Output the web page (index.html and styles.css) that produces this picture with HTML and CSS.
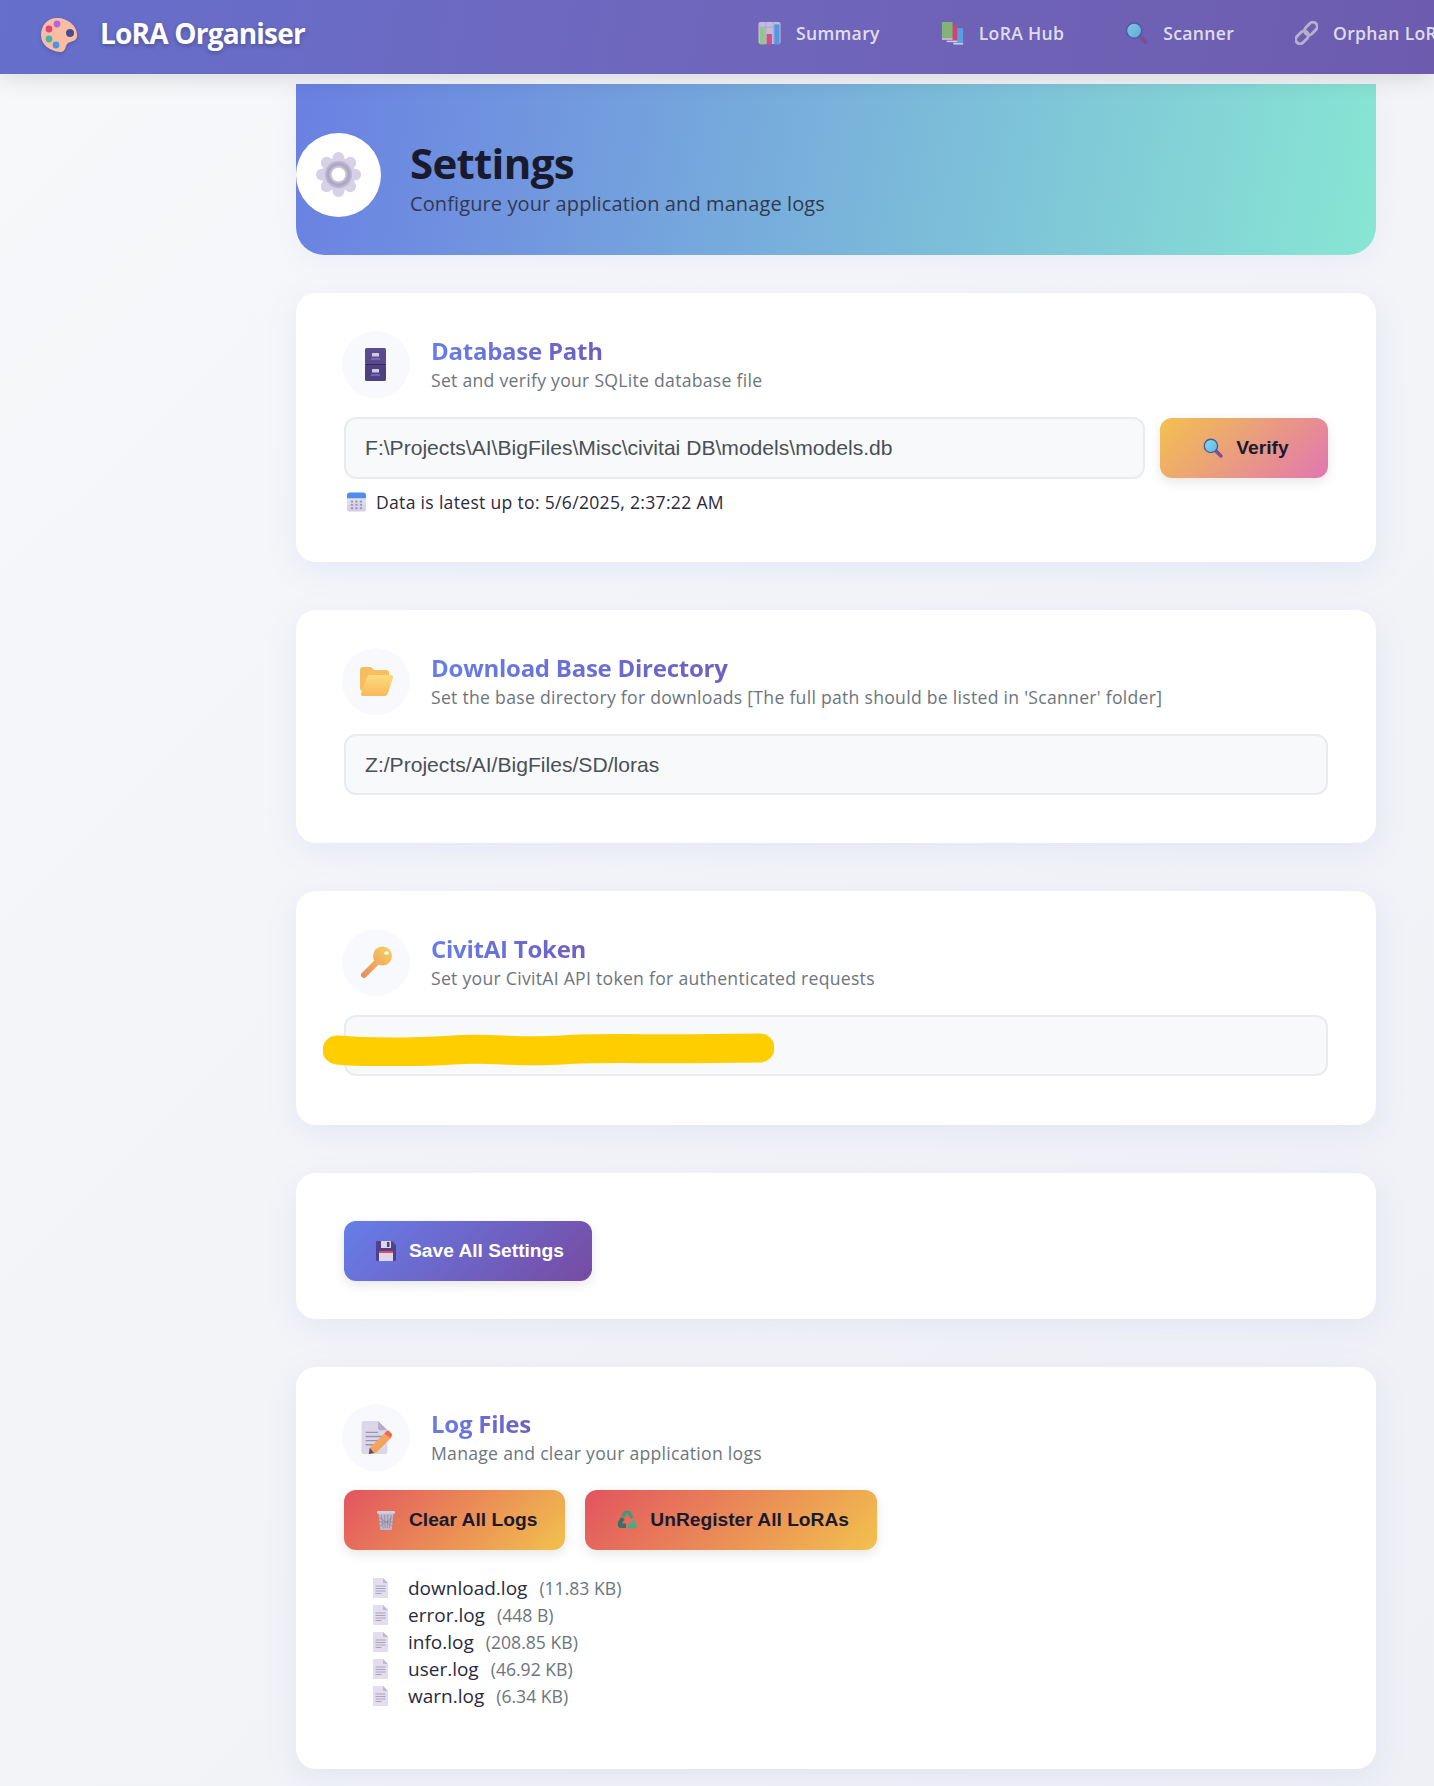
FILE: index.html
```html
<!DOCTYPE html>
<html lang="en">
<head>
    <meta charset="UTF-8">
    <meta name="viewport" content="width=device-width, initial-scale=1.0">
    <title>LoRA Organiser - Settings</title>
    <link rel="stylesheet" href="styles.css">
</head>
<body>
    <svg class="icon-defs" aria-hidden="true">
        <defs>
            <linearGradient id="gradFolder" x1="0" y1="0" x2="0" y2="1"><stop offset="0" stop-color="#fbdc7c"/><stop offset="1" stop-color="#f9b95c"/></linearGradient>
            <linearGradient id="gradKey" gradientUnits="userSpaceOnUse" x1="30" y1="2" x2="3" y2="31"><stop offset="0" stop-color="#f6cf5e"/><stop offset="1" stop-color="#e88d5e"/></linearGradient>
            <linearGradient id="gradLens" x1="0" y1="0" x2="1" y2="1"><stop offset="0" stop-color="#8dd8f0"/><stop offset="1" stop-color="#5cb8e0"/></linearGradient>
            <linearGradient id="gradCal" x1="0" y1="0" x2="0" y2="1"><stop offset="0" stop-color="#eceaf5"/><stop offset="1" stop-color="#d4cde8"/></linearGradient>
            <radialGradient id="gradHub"><stop offset="0.35" stop-color="#e8e5f0"/><stop offset="0.75" stop-color="#a9a3c0"/><stop offset="1" stop-color="#c4bfd6"/></radialGradient>

            <symbol id="i-palette" viewBox="0 0 38 36">
                <path fill="#f9bda3" fill-rule="evenodd" d="M19 1C8 0 1 8 1 18c0 10 9 16 19 17 6 .5 5-7 8-9 4-2 10-2 9-9C36 8 28 2 19 1zM30 12a4 4 0 1 1 0 8 4 4 0 0 1 0-8z"/>
                <circle cx="30" cy="16" r="3.6" fill="#4a4a8c"/>
                <circle cx="17" cy="7" r="3.4" fill="#b565e0"/>
                <circle cx="9" cy="12" r="3.4" fill="#e8437a"/>
                <circle cx="9" cy="22" r="3.4" fill="#45b5a8"/>
                <circle cx="16" cy="28" r="3.4" fill="#4b93ec"/>
            </symbol>
            <symbol id="i-chart" viewBox="0 0 24 24">
                <rect x="0.5" y="0.5" width="23" height="23" rx="2" fill="#d0cbe0"/>
                <path d="M8 .5v23M16 .5v23M.5 6h23" stroke="#bab4cd" stroke-width="1" fill="none"/>
                <rect x="2" y="7" width="5" height="17" fill="#9bd67a"/>
                <rect x="9" y="13" width="5.5" height="11" fill="#e04a80"/>
                <rect x="17" y="3" width="5.5" height="21" fill="#4f9fe8"/>
            </symbol>
            <symbol id="i-books" viewBox="0 0 24 24">
                <rect x="13" y="7" width="10" height="17" fill="#5aa8ee"/>
                <rect x="6" y="4" width="11" height="16" fill="#d8436b"/>
                <rect x="6" y="20" width="11" height="1.5" fill="#e8e4f0"/>
                <rect x="1" y="0.5" width="11" height="17" fill="#86c46a"/>
                <rect x="1" y="17.5" width="11" height="1.5" fill="#e8e4f0"/>
                <rect x="13" y="22.5" width="10" height="1.5" fill="#e8e4f0"/>
            </symbol>
            <symbol id="i-search" viewBox="0 0 24 24">
                <path d="M14.5 14.5l7 7" stroke="#7c4f96" stroke-width="4.2" stroke-linecap="round"/>
                <circle cx="9.5" cy="9.5" r="8" fill="url(#gradLens)" stroke="#3f5f9c" stroke-width="1.6"/>
            </symbol>
            <symbol id="i-link" viewBox="0 0 24 24">
                <g fill="none" stroke="#c4bfd2" stroke-width="3" transform="rotate(-45 12 12)">
                    <rect x="-2" y="7.500" width="15" height="9" rx="4.500"/>
                    <rect x="11" y="7.500" width="15" height="9" rx="4.500"/>
                </g>
            </symbol>
            <symbol id="i-gear" viewBox="0 0 48 48">
                <g fill="#d6d1e7">
                    <circle cx="24" cy="24" r="17"/>
                    <rect x="18" y="1" width="12" height="46" rx="6"/>
                    <rect x="18" y="1" width="12" height="46" rx="6" transform="rotate(45 24 24)"/>
                    <rect x="18" y="1" width="12" height="46" rx="6" transform="rotate(90 24 24)"/>
                    <rect x="18" y="1" width="12" height="46" rx="6" transform="rotate(135 24 24)"/>
                </g>
                <circle cx="24" cy="24" r="14" fill="url(#gradHub)"/>
                <circle cx="24" cy="24" r="7" fill="#fff"/>
            </symbol>
            <symbol id="i-cabinet" viewBox="0 0 21 33">
                <rect width="21" height="16.5" rx="1.5" fill="#5b4a8e"/>
                <rect y="16.5" width="21" height="16.5" rx="1.5" fill="#4f4080"/>
                <path d="M0 16.5h21" stroke="#352b5c" stroke-width="1"/>
                <rect x="7" y="5" width="7" height="3.5" fill="#cfc9e4"/>
                <rect x="6" y="10.5" width="9" height="1" fill="#9a84d6"/>
                <rect x="7" y="21" width="7" height="3.5" fill="#cfc9e4"/>
                <rect x="6" y="26.5" width="9" height="1" fill="#9a84d6"/>
            </symbol>
            <symbol id="i-calendar" viewBox="0 0 20 20">
                <rect width="20" height="20" rx="3" fill="url(#gradCal)"/>
                <path d="M0 6V3a3 3 0 0 1 3-3h14a3 3 0 0 1 3 3v3z" fill="#4f8fec"/>
                <g fill="#9d97b5">
                    <rect x="4" y="8.5" width="2.5" height="2"/><rect x="8.7" y="8.5" width="2.5" height="2"/><rect x="13.4" y="8.5" width="2.5" height="2" fill="#5ca8ec"/>
                    <rect x="4" y="12" width="2.5" height="2"/><rect x="8.7" y="12" width="2.5" height="2"/><rect x="13.4" y="12" width="2.5" height="2"/>
                    <rect x="4" y="15.5" width="2.5" height="2"/><rect x="8.7" y="15.5" width="2.5" height="2"/><rect x="13.4" y="15.5" width="2.5" height="2"/>
                </g>
            </symbol>
            <symbol id="i-folder" viewBox="0 0 33 29">
                <path d="M0 3a3 3 0 0 1 3-3h7c2 0 3 2 4 3h12a3 3 0 0 1 3 3v18H3a3 3 0 0 1-3-3z" fill="#f8bd60"/>
                <path d="M7 10a3 3 0 0 1 3-2h21c1.500 0 2.300 1 2 2.500L28 26a4 4 0 0 1-4 3H3c-1.500 0-2.500-1-2-2.500z" fill="url(#gradFolder)"/>
            </symbol>
            <symbol id="i-key" viewBox="0 0 33 33">
                <path d="M18 15L4 29" fill="none" stroke="url(#gradKey)" stroke-width="6" stroke-linecap="round"/>
                <circle cx="22.500" cy="10" r="9.500" fill="url(#gradKey)"/>
                <ellipse cx="26.500" cy="7" rx="2.300" ry="1.800" fill="#fff"/>
            </symbol>
            <symbol id="i-memo" viewBox="0 0 29 32">
                <path d="M0 2a2 2 0 0 1 2-2h14l9 9v21a2 2 0 0 1-2 2H2a2 2 0 0 1-2-2z" fill="#dcd6ea"/>
                <path d="M16 0l9 9h-7a2 2 0 0 1-2-2z" fill="#b4adc9"/>
                <path d="M4 11h12M4 15h16M4 19h14M4 23h8" stroke="#9a94ad" stroke-width="1.300"/>
                <path d="M22 12l6 5-14 14-7 1 1-6z" fill="#f4a45c"/>
                <path d="M22 12l2-2c1-1 2-1 3 0l2 2c1 1 1 2 0 3l-1 2z" fill="#ee6a50"/>
                <path d="M8 26l-1 6 5-1z" fill="#5a4a6e"/>
            </symbol>
            <symbol id="i-floppy" viewBox="0 0 20 20">
                <path d="M1 0h15l4 4v15a1 1 0 0 1-1 1H1a1 1 0 0 1-1-1V1a1 1 0 0 1 1-1z" fill="#4f4288"/>
                <rect x="5" y="0" width="10" height="7" fill="#dcd8ec"/>
                <rect x="11" y="1" width="2.500" height="5" fill="#4f4288"/>
                <rect x="3" y="10" width="14" height="10" fill="#dcd6ec"/>
                <rect x="3" y="10" width="14" height="2" fill="#e8485c"/>
            </symbol>
            <symbol id="i-trash" viewBox="0 0 20 21">
                <path d="M2 3h16l-2 18H4z" fill="#bdb8cc"/>
                <path d="M5 5l2 14M8.500 5l.7 14M12 5l-.7 14M15.500 5l-2 14M3 8l13.500 9M17 8L3.500 17M2.500 12.500l15 0" stroke="#8d879f" stroke-width=".8" fill="none"/>
                <rect x="0.500" y="1" width="19" height="3" rx="1" fill="#d3cede"/>
            </symbol>
            <symbol id="i-recycle" viewBox="0 0 20 20">
                <path d="M7 1h6l3.500 6-3 1.500L10 3 7.500 7.500 4 6z" fill="#3f9a78"/>
                <path d="M1 12l3-5 3.500 2L5 13.500h4V18H3.500a3 3 0 0 1-2.500-4z" fill="#3c6e6a"/>
                <path d="M11 13.500h4l-1-2 3-2 2.500 5c.7 2-.5 4-2.500 4h-6z" fill="#4aaa84"/>
            </symbol>
            <symbol id="i-page" viewBox="0 0 15 20">
                <path d="M0 0h10l5 5v15H0z" fill="#e3ddef"/>
                <path d="M10 0l5 5h-5z" fill="#c0b9d3"/>
                <path d="M2.500 8h10M2.500 10.500h10M2.500 13h10M2.500 15.500h6" stroke="#a8a3b8" stroke-width="1"/>
            </symbol>
        </defs>
    </svg>

    <nav class="navbar">
        <a class="brand" href="#">
            <svg class="brand-icon"><use href="#i-palette"/></svg>
            <span>LoRA Organiser</span>
        </a>
        <div class="nav-links">
            <a href="#"><svg class="nav-icon"><use href="#i-chart"/></svg>Summary</a>
            <a href="#"><svg class="nav-icon"><use href="#i-books"/></svg>LoRA Hub</a>
            <a href="#"><svg class="nav-icon"><use href="#i-search"/></svg>Scanner</a>
            <a href="#"><svg class="nav-icon"><use href="#i-link"/></svg>Orphan LoRAs</a>
        </div>
    </nav>

    <main class="page">
        <header class="hero">
            <div class="hero-icon"><svg class="gear"><use href="#i-gear"/></svg></div>
            <div class="hero-text">
                <h1>Settings</h1>
                <p>Configure your application and manage logs</p>
            </div>
        </header>

        <section class="card">
            <div class="card-header">
                <div class="card-icon"><svg class="ic-cabinet"><use href="#i-cabinet"/></svg></div>
                <div class="card-title">
                    <h2>Database Path</h2>
                    <p>Set and verify your SQLite database file</p>
                </div>
            </div>
            <div class="input-row">
                <input class="text-input" type="text" value="F:\Projects\AI\BigFiles\Misc\civitai DB\models\models.db">
                <button class="btn btn-verify"><svg class="btn-icon"><use href="#i-search"/></svg>Verify</button>
            </div>
            <div class="status">
                <svg class="status-icon"><use href="#i-calendar"/></svg>
                <span>Data is latest up to: 5/6/2025, 2:37:22 AM</span>
            </div>
        </section>

        <section class="card">
            <div class="card-header">
                <div class="card-icon"><svg class="ic-large"><use href="#i-folder"/></svg></div>
                <div class="card-title">
                    <h2>Download Base Directory</h2>
                    <p>Set the base directory for downloads [The full path should be listed in 'Scanner' folder]</p>
                </div>
            </div>
            <input class="text-input" type="text" value="Z:/Projects/AI/BigFiles/SD/loras">
        </section>

        <section class="card">
            <div class="card-header">
                <div class="card-icon"><svg class="ic-large"><use href="#i-key"/></svg></div>
                <div class="card-title">
                    <h2>CivitAI Token</h2>
                    <p>Set your CivitAI API token for authenticated requests</p>
                </div>
            </div>
            <div class="token-wrap">
                <input class="text-input" type="text" value="0000000000000000000000">
                <svg class="scribble" viewBox="0 0 451 33" preserveAspectRatio="none">
                    <path d="M14 17C50 20 80 20 130 17 170 14 190 20 240 17 280 14 320 17 437 15" fill="none" stroke="#ffce00" stroke-width="29" stroke-linecap="round"/>
                </svg>
            </div>
        </section>

        <section class="card card-save">
            <button class="btn btn-save"><svg class="btn-icon"><use href="#i-floppy"/></svg>Save All Settings</button>
        </section>

        <section class="card card-logs">
            <div class="card-header">
                <div class="card-icon"><svg class="ic-large"><use href="#i-memo"/></svg></div>
                <div class="card-title">
                    <h2>Log Files</h2>
                    <p>Manage and clear your application logs</p>
                </div>
            </div>
            <div class="btn-row">
                <button class="btn btn-danger"><svg class="btn-icon"><use href="#i-trash"/></svg>Clear All Logs</button>
                <button class="btn btn-danger"><svg class="btn-icon"><use href="#i-recycle"/></svg>UnRegister All LoRAs</button>
            </div>
            <ul class="log-list">
                <li><svg class="log-icon"><use href="#i-page"/></svg><span class="log-name">download.log</span><span class="log-size">(11.83 KB)</span></li>
                <li><svg class="log-icon"><use href="#i-page"/></svg><span class="log-name">error.log</span><span class="log-size">(448 B)</span></li>
                <li><svg class="log-icon"><use href="#i-page"/></svg><span class="log-name">info.log</span><span class="log-size">(208.85 KB)</span></li>
                <li><svg class="log-icon"><use href="#i-page"/></svg><span class="log-name">user.log</span><span class="log-size">(46.92 KB)</span></li>
                <li><svg class="log-icon"><use href="#i-page"/></svg><span class="log-name">warn.log</span><span class="log-size">(6.34 KB)</span></li>
            </ul>
        </section>
    </main>
</body>
</html>
```

FILE: styles.css
```css
* {
    box-sizing: border-box;
}
html, body {
    overflow-x: hidden;
}
body {
    margin: 0;
    font-family: "Open Sans", "Noto Sans", sans-serif;
    color: #1a1a2e;
    background: linear-gradient(135deg, #f7f8fa, #eff0f5);
}
.icon-defs {
    display: block;
    width: 0;
    height: 0;
}
.navbar {
    position: relative;
    z-index: 2;
    display: flex;
    align-items: center;
    height: 74px;
    padding-left: 40px;
    padding-bottom: 9px;
    overflow: hidden;
    white-space: nowrap;
    background: linear-gradient(100deg, #656fcc 0%, #6f66bc 50%, #6d5cae 100%);
    box-shadow: 0 4px 24px rgba(0, 0, 0, 0.12);
}
.brand {
    display: flex;
    flex: 0 0 718px;
    align-items: center;
    gap: 22px;
    font-size: 28px;
    font-weight: 700;
    letter-spacing: -0.8px;
    color: #fff;
    text-decoration: none;
    text-shadow: 0 2px 4px rgba(0, 0, 0, 0.25);
}
.brand-icon {
    width: 38px;
    height: 36px;
    margin-top: 4px;
    filter: drop-shadow(0 2px 2px rgba(0, 0, 0, 0.15));
}
.nav-links {
    display: flex;
    flex-shrink: 0;
    gap: 61px;
}
.nav-links a {
    display: flex;
    align-items: center;
    gap: 15px;
    font-size: 17.6px;
    font-weight: 600;
    letter-spacing: 0.3px;
    color: rgba(255, 255, 255, 0.8);
    text-decoration: none;
}
.nav-icon {
    width: 23px;
    height: 24px;
    opacity: 0.85;
}
.page {
    padding: 10px 58px 17px 296px;
}
.hero {
    display: flex;
    align-items: center;
    gap: 29px;
    height: 171px;
    margin-bottom: 38px;
    padding-top: 10px;
    border-radius: 0 0 28px 28px;
    background: linear-gradient(100deg, #6a80e2 0%, #88e6d3 100%);
    box-shadow: 0 8px 24px rgba(102, 126, 234, 0.06);
}
.hero-icon {
    display: flex;
    align-items: center;
    justify-content: center;
    width: 85px;
    height: 84px;
    border-radius: 50%;
    background: #fff;
}
.gear {
    width: 47px;
    height: 47px;
}
.hero-text {
    padding-top: 6px;
}
.hero h1 {
    margin: 0;
    font-size: 42px;
    line-height: 53px;
    font-weight: 700;
    letter-spacing: -0.7px;
    color: #1a1a2e;
}
.hero p {
    margin: 0;
    font-size: 20px;
    line-height: 30px;
    letter-spacing: 0.1px;
    color: #33384f;
}
.card {
    margin-bottom: 48px;
    padding: 38px 48px 48px;
    border-radius: 20px;
    background: #fff;
    box-shadow: 0 8px 32px rgba(102, 126, 234, 0.1);
}
.card-save {
    padding: 48px 48px 38px;
}
.card-logs {
    margin-bottom: 0;
    padding: 37px 48px 60px;
}
.card-header {
    display: flex;
    align-items: center;
    gap: 21px;
    margin-bottom: 19px;
    margin-left: -2px;
}
.card-title {
    padding-bottom: 2px;
}
.card-icon {
    display: flex;
    flex-shrink: 0;
    align-items: center;
    justify-content: center;
    width: 68px;
    height: 67px;
    border-radius: 50%;
    background: #f8f9fd;
}
.ic-cabinet {
    width: 21px;
    height: 33px;
    margin-right: 2px;
}
.ic-large {
    width: 33px;
    height: 33px;
}
.card h2 {
    width: fit-content;
    margin: 0;
    font-size: 24px;
    line-height: 32px;
    font-weight: 700;
    letter-spacing: -0.25px;
    color: transparent;
    background: linear-gradient(90deg, #667eea, #6e5fbe);
    -webkit-background-clip: text;
    background-clip: text;
}
.card p {
    margin: 0;
    font-size: 17.6px;
    line-height: 26px;
    letter-spacing: 0.28px;
    color: #6c757d;
}
.input-row {
    display: flex;
    gap: 15px;
}
.input-row .text-input {
    height: 62px;
}
.text-input {
    display: block;
    flex: 1;
    width: 100%;
    height: 61px;
    padding: 0 19px;
    border: 2px solid #e9ecef;
    border-radius: 12px;
    font-family: "Liberation Sans", Arial, sans-serif;
    font-size: 21.1px;
    color: #495057;
    background: #f8f9fa;
}
.btn {
    display: inline-flex;
    align-items: center;
    justify-content: center;
    gap: 13px;
    height: 60px;
    padding: 0 28px 0 32px;
    border: 0;
    border-radius: 12px;
    font-family: "Liberation Sans", Arial, sans-serif;
    font-size: 19.2px;
    font-weight: 700;
    color: #1a1a2e;
    box-shadow: 0 4px 12px rgba(0, 0, 0, 0.1);
}
.btn-icon {
    width: 20px;
    height: 20px;
}
.btn-verify {
    flex: 0 0 168px;
    align-self: center;
    background: linear-gradient(135deg, #f2c14e, #e277b0);
}
.btn-save {
    color: #fff;
    background: linear-gradient(135deg, #667eea, #764ba2);
}
.btn-danger {
    background: linear-gradient(135deg, #e2545f, #f2c14e);
}
.btn-row {
    display: flex;
    gap: 20px;
}
.status {
    display: flex;
    align-items: center;
    gap: 10px;
    margin-top: 13px;
    margin-bottom: 2px;
    padding-left: 3px;
    font-size: 17.6px;
    line-height: 20px;
    letter-spacing: 0.29px;
    color: #2a2a3e;
}
.status-icon {
    width: 19px;
    height: 20px;
}
.token-wrap {
    position: relative;
    padding-bottom: 1px;
}
.scribble {
    position: absolute;
    top: 18px;
    left: -21px;
    width: 451px;
    height: 33px;
}
.log-list {
    margin: 24px 0 0;
    padding: 0 0 0 29px;
    list-style: none;
}
.log-list li {
    display: flex;
    align-items: center;
    height: 27px;
}
.log-icon {
    width: 15px;
    height: 20px;
    margin-right: 20px;
}
.log-name {
    margin-right: 12px;
    font-size: 19px;
    color: #2a2a3e;
}
.log-size {
    font-size: 17.6px;
    color: #6c757d;
}
```
